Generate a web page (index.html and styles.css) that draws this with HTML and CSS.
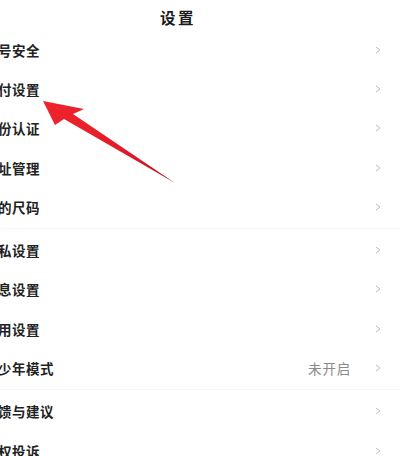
FILE: index.html
```html
<!DOCTYPE html>
<html lang="zh-CN">
<head>
<meta charset="utf-8">
<title>设置</title>
<link rel="stylesheet" href="styles.css">
</head>
<body>
<div class="page">
  <header class="header"><h1 class="title">设置</h1></header>

  <section class="group">
    <div class="row"><span class="label">账号安全</span><svg class="chev" viewBox="0 0 6 8"><polyline points="1,1 5,4 1,7"/></svg></div>
    <div class="row"><span class="label">支付设置</span><svg class="chev" viewBox="0 0 6 8"><polyline points="1,1 5,4 1,7"/></svg></div>
    <div class="row"><span class="label">身份认证</span><svg class="chev" viewBox="0 0 6 8"><polyline points="1,1 5,4 1,7"/></svg></div>
    <div class="row"><span class="label">地址管理</span><svg class="chev" viewBox="0 0 6 8"><polyline points="1,1 5,4 1,7"/></svg></div>
    <div class="row"><span class="label">我的尺码</span><svg class="chev" viewBox="0 0 6 8"><polyline points="1,1 5,4 1,7"/></svg></div>
  </section>
  <div class="sep"></div>
  <section class="group">
    <div class="row"><span class="label">隐私设置</span><svg class="chev" viewBox="0 0 6 8"><polyline points="1,1 5,4 1,7"/></svg></div>
    <div class="row"><span class="label">消息设置</span><svg class="chev" viewBox="0 0 6 8"><polyline points="1,1 5,4 1,7"/></svg></div>
    <div class="row"><span class="label">通用设置</span><svg class="chev" viewBox="0 0 6 8"><polyline points="1,1 5,4 1,7"/></svg></div>
    <div class="row"><span class="label">青少年模式</span><span class="value">未开启</span><svg class="chev" viewBox="0 0 6 8"><polyline points="1,1 5,4 1,7"/></svg></div>
  </section>
  <div class="sep"></div>
  <section class="group">
    <div class="row"><span class="label">反馈与建议</span><svg class="chev" viewBox="0 0 6 8"><polyline points="1,1 5,4 1,7"/></svg></div>
    <div class="row"><span class="label">侵权投诉</span><svg class="chev" viewBox="0 0 6 8"><polyline points="1,1 5,4 1,7"/></svg></div>
  </section>

  <svg class="arrow" viewBox="0 0 400 456" aria-hidden="true">
    <defs>
      <linearGradient id="ag" x1="43" y1="101" x2="175" y2="183" gradientUnits="userSpaceOnUse">
        <stop offset="0" stop-color="#f0232d"/>
        <stop offset="0.6" stop-color="#e01e2a"/>
        <stop offset="1" stop-color="#b5121c"/>
      </linearGradient>
      <filter id="soft" x="-10%" y="-10%" width="120%" height="120%">
        <feGaussianBlur stdDeviation="0.6"/>
      </filter>
    </defs>
    <polygon points="43,101 84,109 73,114 175,183 64,119 55,125" fill="url(#ag)" filter="url(#soft)"/>
  </svg>
</div>
</body>
</html>
```

FILE: styles.css
```css
html, body {
  margin: 0;
  padding: 0;
  background: #ffffff;
}

.page {
  position: relative;
  width: 400px;
  height: 456px;
  overflow: hidden;
  font-family: "Noto Sans CJK SC", "Noto Sans", sans-serif;
  color: #1a1a1a;
}

.header {
  height: 30px;
  padding-right: 44px;
  box-sizing: border-box;
  display: flex;
  justify-content: center;
}

.title {
  margin: 0;
  padding-top: 5px;
  font-size: 15.5px;
  line-height: 24px;
  font-weight: 700;
  letter-spacing: 2.5px;
  color: #1a1a1a;
}

.group {
  display: flex;
  flex-direction: column;
}

.row {
  display: flex;
  align-items: center;
  height: 39.3px;
  padding-right: 19px;
}

.label {
  flex: 1;
  margin-left: -16px;
  font-size: 13.5px;
  letter-spacing: 0.5px;
  font-weight: 700;
  white-space: nowrap;
  color: #222222;
}

.value {
  margin-right: 24px;
  font-size: 13.5px;
  letter-spacing: 0.8px;
  color: #8a8a8a;
}

.chev {
  width: 6px;
  height: 8px;
  fill: none;
  stroke: #bdbdbd;
  stroke-width: 1;
}

.sep {
  height: 4px;
  display: flex;
  align-items: center;
}

.sep::before {
  content: "";
  flex: 1;
  height: 1px;
  background: #f6f6f6;
}

.arrow {
  position: absolute;
  left: 0;
  top: 0;
  width: 400px;
  height: 456px;
  pointer-events: none;
}
```
